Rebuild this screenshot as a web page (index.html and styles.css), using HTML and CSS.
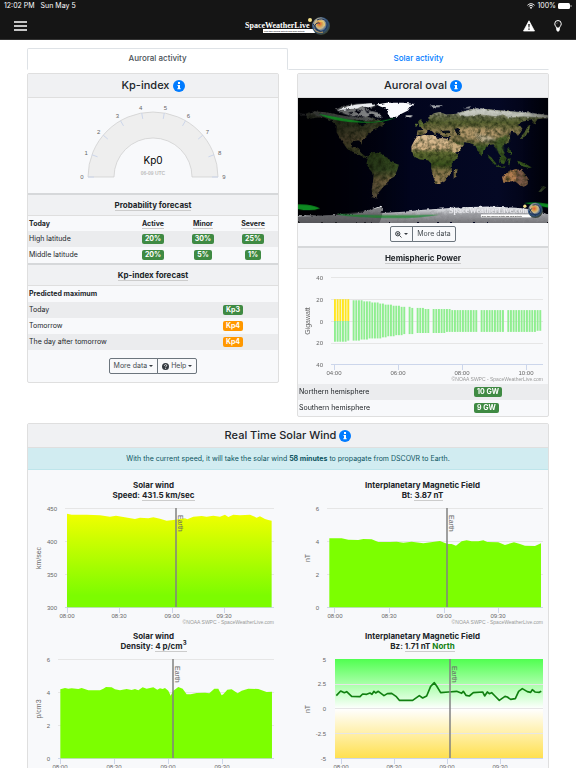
FILE: index.html
```html
<!DOCTYPE html>
<html lang="en">
<head>
<meta charset="utf-8">
<meta name="viewport" content="width=device-width, initial-scale=1">
<title>SpaceWeatherLive - Auroral activity</title>
<link rel="stylesheet" href="styles.css">
</head>
<body>
<svg class="defs" aria-hidden="true">
  <defs>
    <radialGradient id="globe" cx=".42" cy=".38" r=".65">
      <stop offset="0" stop-color="#e8553a"/><stop offset=".22" stop-color="#d8a04a"/><stop offset=".4" stop-color="#c9b890"/><stop offset=".65" stop-color="#2f5688"/><stop offset="1" stop-color="#3a3f26"/>
    </radialGradient>
    <symbol id="logo" viewBox="0 0 88 20">
      <text x="1" y="12" class="logo-name">SpaceWeatherLive</text>
      <rect x="19" y="13" width="54" height="4" fill="#fff"/>
      <text x="20" y="16" class="logo-tag">Real-time auroral activity and solar activity</text>
      <circle cx="77" cy="10" r="9" fill="url(#globe)"/>
      <path d="M69 8c2 2 4 6 8 8M73 4c6-3 11 1 10 6s-6 7-10 4-2-8 3-7" fill="none" stroke="#1d3357" stroke-width="1"/>
      <path d="M70 13c2 3 6 4 9 3" fill="none" stroke="#c9a25a" stroke-width="1"/>
      <path d="M75 6c4-2 6 1 5 4" fill="none" stroke="#f5d060" stroke-width="1"/>
      <circle cx="66" cy="4" r="2" fill="#f7e38b"/>
    </symbol>
    <symbol id="info" viewBox="0 0 12 12">
      <circle cx="6" cy="6" r="6" fill="#007bff"/>
      <path d="M5 2h2v2H5zM4.500 5H7v3.300h.7v1H4.300v-1H5V6h-.5z" fill="#fff"/>
    </symbol>
  </defs>
</svg>

<header class="topbar">
  <div class="status">
    <span>12:02 PM</span><span>Sun May 5</span>
    <span class="status-right">
      <svg width="8" height="6" viewBox="0 0 16 12"><path d="M1 4.500C5 .5 11 .5 15 4.500M3.500 7c3-2.700 6-2.700 9 0" fill="none" stroke="#fff" stroke-width="2"/><path d="M5.500 8.800q2.500-2 5 0L8 12z" fill="#fff"/></svg>
      100%
      <svg width="14" height="6" viewBox="0 0 14 6"><rect width="12" height="6" rx="1.500" fill="#fff"/><path d="M13 2v2" stroke="#aaa"/></svg>
    </span>
  </div>
  <nav class="navbar">
    <button class="icon-btn" aria-label="Menu"><svg width="13" height="10" viewBox="0 0 13 10"><path d="M0 1h13M0 5h13M0 9h13" stroke="#fff" stroke-width="1.300"/></svg></button>
    <a class="brand" href="#" aria-label="SpaceWeatherLive"><svg width="88" height="20"><use href="#logo"/></svg></a>
    <div class="nav-actions">
      <button class="icon-btn" aria-label="Alerts"><svg width="12" height="12" viewBox="0 0 24 24"><path d="M12 1.500 23 22H1z" fill="#fff" stroke="#fff" stroke-width="1.500" stroke-linejoin="round"/><path d="M10.500 8h3l-.6 7h-1.800zM10.600 17h2.800v2.700h-2.800z" fill="#151515"/></svg></button>
      <button class="icon-btn" aria-label="Theme"><svg width="8" height="12" viewBox="0 0 16 24"><path d="M5 16c0-3-3.500-4-3.500-8.500a6.500 6.500 0 0 1 13 0C14.500 12 11 13 11 16z" fill="none" stroke="#fff" stroke-width="2"/><path d="M4.500 16h7v4L9.500 23h-3l-2-3zM5 8a3 3 0 0 1 3-3" fill="#fff"/></svg></button>
    </div>
  </nav>
</header>

<main class="page">
  <div class="tabs">
    <a class="tab active" href="#">Auroral activity</a>
    <a class="tab" href="#">Solar activity</a>
  </div>

  <div class="columns">
    <section class="card">
      <h2 class="card-title">Kp-index <svg class="info"><use href="#info"/></svg></h2>
      <svg class="chart" viewBox="0 0 250 95" role="img" aria-label="Kp gauge">
        <path d="M60 79a65 65 0 0 1 130 0h-26a39 39 0 0 0-78 0z" fill="#eee" stroke="#ccc" stroke-width=".7"/>
        <g id="gauge"></g>
        <text x="125" y="66" class="kp-value">Kp0</text>
        <text x="125" y="77" class="kp-time">06-09 UTC</text>
      </svg>

      <h3 class="section-title"><span class="hint">Probability forecast</span></h3>
      <table class="grid-table odds-table">
        <thead><tr><th>Today</th><th class="mid"><span class="hint">Active</span></th><th class="mid"><span class="hint">Minor</span></th><th class="mid"><span class="hint">Severe</span></th></tr></thead>
        <tbody>
          <tr><td>High latitude</td><td class="mid"><span class="badge">20%</span></td><td class="mid"><span class="badge">30%</span></td><td class="mid"><span class="badge">25%</span></td></tr>
          <tr><td>Middle latitude</td><td class="mid"><span class="badge">20%</span></td><td class="mid"><span class="badge">5%</span></td><td class="mid"><span class="badge">1%</span></td></tr>
        </tbody>
      </table>

      <h3 class="section-title"><span class="hint">Kp-index forecast</span></h3>
      <table class="grid-table kp-table">
        <thead><tr><th>Predicted maximum</th><th></th></tr></thead>
        <tbody>
          <tr><td>Today</td><td class="mid"><span class="badge">Kp3</span></td></tr>
          <tr><td>Tomorrow</td><td class="mid"><span class="badge warn">Kp4</span></td></tr>
          <tr><td>The day after tomorrow</td><td class="mid"><span class="badge warn">Kp4</span></td></tr>
        </tbody>
      </table>
      <div class="actions roomy">
        <div class="btn-group">
          <button class="btn">More data <i class="caret"></i></button>
          <button class="btn"><svg width="7" height="7" viewBox="0 0 14 14"><circle cx="7" cy="7" r="7" fill="#343a40"/><path d="M4.800 5.300c.2-3 4.600-2.700 4.500-.2C9.200 6.700 7.300 6.600 7.200 8.500M7.200 9.800v1.800" fill="none" stroke="#fff" stroke-width="1.700"/></svg> Help <i class="caret"></i></button>
        </div>
      </div>
    </section>

    <section class="card">
      <h2 class="card-title">Auroral oval <svg class="info"><use href="#info"/></svg></h2>
      <svg class="chart map" viewBox="21 24 756 378" role="img" aria-label="World map with the auroral oval">
        <defs>
          <linearGradient id="sea"><stop offset="0" stop-color="#00000a"/><stop offset=".45" stop-color="#02051d"/><stop offset=".8" stop-color="#040824"/><stop offset="1" stop-color="#01020f"/></linearGradient>
          <linearGradient id="night"><stop offset="0" stop-color="#000" stop-opacity=".85"/><stop offset=".2" stop-color="#000" stop-opacity=".6"/><stop offset=".32" stop-color="#000" stop-opacity=".4"/><stop offset=".45" stop-color="#000" stop-opacity="0"/><stop offset=".9" stop-color="#000" stop-opacity="0"/><stop offset="1" stop-color="#000" stop-opacity=".5"/></linearGradient>
          <linearGradient id="africa" x2="0" y2="1"><stop offset="0" stop-color="#dcc096"/><stop offset=".27" stop-color="#d4b285"/><stop offset=".36" stop-color="#5f6a32"/><stop offset=".6" stop-color="#39501c"/><stop offset=".75" stop-color="#86744a"/><stop offset="1" stop-color="#a98c60"/></linearGradient>
          <linearGradient id="asia" x2="0" y2="1"><stop offset="0" stop-color="#a9aba0"/><stop offset=".14" stop-color="#74775a"/><stop offset=".28" stop-color="#56602f"/><stop offset=".48" stop-color="#8f7e54"/><stop offset=".66" stop-color="#7a7046"/><stop offset=".8" stop-color="#3c5a24"/></linearGradient>
          <linearGradient id="america" x2="0" y2="1"><stop offset="0" stop-color="#a5a79e"/><stop offset=".25" stop-color="#4a5632"/><stop offset=".6" stop-color="#86754f"/><stop offset="1" stop-color="#4f6131"/></linearGradient>
          <linearGradient id="amazon" x2="0" y2="1"><stop offset="0" stop-color="#3e5c24"/><stop offset=".38" stop-color="#3f5728"/><stop offset=".6" stop-color="#8e7a50"/><stop offset="1" stop-color="#85775b"/></linearGradient>
          <linearGradient id="ice" x2="0" y2="1"><stop offset="0" stop-color="#f4f6fa"/><stop offset=".5" stop-color="#9a9ba0"/><stop offset="1" stop-color="#77777b"/></linearGradient>
          <filter id="rough" x="0" y="0" width="1" height="1" color-interpolation-filters="sRGB">
            <feTurbulence type="fractalNoise" baseFrequency=".08" numOctaves="3" seed="4" result="n"/>
            <feDisplacementMap in="SourceGraphic" in2="n" scale="9" xChannelSelector="R" yChannelSelector="G" result="d"/>
            <feColorMatrix in="n" values="0 0 0 0 .1 0 0 0 0 .14 0 0 0 0 .05 1.600 0 0 0 -.6" result="m"/>
            <feComposite in="m" in2="d" operator="in" result="t"/>
            <feMerge><feMergeNode in="d"/><feMergeNode in="t"/></feMerge>
          </filter>
          <filter id="edge" x="0" y="0" width="1" height="1">
            <feTurbulence type="fractalNoise" baseFrequency=".1" numOctaves="2" seed="9" result="n"/>
            <feDisplacementMap in="SourceGraphic" in2="n" scale="10" xChannelSelector="R" yChannelSelector="G"/>
          </filter>
          <filter id="soft"><feGaussianBlur stdDeviation="2"/></filter>
          <filter id="blend"><feGaussianBlur stdDeviation="5"/></filter>
        </defs>
        <rect x="21" y="24" width="756" height="378" fill="url(#sea)"/>
        <g filter="url(#rough)">
          <path fill="url(#america)" d="M45 72 70 64 110 68 150 76 195 84 235 82 262 88 285 98 272 112 250 118 240 130 228 143 215 150 214 165 206 152 190 154 180 162 184 174 196 176 206 172 204 182 214 192 224 200 236 206 230 208 210 198 190 188 170 178 160 164 146 142 138 128 138 108 120 92 98 82 72 84 50 88z"/>
          <path fill="url(#amazon)" d="M238 192 250 187 272 192 282 200 296 207 300 216 326 226 322 240 312 262 298 270 290 284 280 292 270 304 262 312 258 328 246 324 244 300 248 276 250 254 236 238 228 222 232 208z"/>
          <path fill="url(#africa)" d="M380 142 400 136 430 136 440 144 460 146 474 148 482 168 492 190 508 190 500 208 486 222 486 244 476 258 466 276 450 284 438 284 430 262 424 240 424 222 414 212 390 210 374 204 364 190 364 170 372 154zM492 244 504 238 500 262 492 266z"/>
          <path fill="url(#asia)" d="M380 136 382 122 398 120 390 108 404 100 420 92 414 84 432 70 448 66 470 74 500 72 520 64 560 56 600 58 660 64 720 70 776 76 776 84 745 88 735 104 728 88 700 92 690 104 700 118 694 128 686 138 678 128 664 126 662 140 658 156 642 166 636 174 646 190 638 204 628 192 622 176 612 164 600 166 582 182 576 200 566 184 556 166 540 160 522 158 524 164 508 184 490 192 480 172 474 154 480 142 456 142 448 130 438 128 442 140 426 124 414 124 400 134z"/>
          <path fill="#c7ab7d" d="M470 152 482 148 494 158 502 164 522 166 508 184 490 192 482 176z"/>
          <g filter="url(#blend)">
            <path fill="#c0a374" opacity=".7" d="M500 118 540 112 580 116 626 120 650 130 620 146 570 152 540 150 510 142z"/>
            <path fill="#c9c5b0" opacity=".6" d="M556 132 580 138 606 142 622 152 590 158 566 148z"/>
            <path fill="#3f5a25" opacity=".9" d="M612 150 650 132 660 150 640 166 640 190 624 180z"/>
          </g>
          <path fill="#5d6f35" d="M384 92 394 88 402 108 388 112zM374 102h8v8h-8z"/>
          <path fill="#38581f" d="M594 194 606 204 622 224 616 226 600 208zM630 204 644 196 652 206 644 224 630 220zM655 208 664 206 660 228 654 222zM620 228 650 232 648 236 620 232zM684 214 704 220 728 234 720 236 690 228zM654 176 664 178 666 196 656 190z"/>
          <path fill="#62703a" d="M706 128 712 116 718 108 724 104 720 120 710 138 700 144 692 144z"/>
          <path fill="#b07c50" d="M638 262 652 252 664 244 682 238 690 246 698 238 706 252 718 270 714 286 704 292 692 288 678 276 658 280 642 280z"/>
          <path fill="#7c5a48" d="M682 240 690 248 698 238 706 252 718 270 714 286 704 292 692 288 680 272z"/>
          <path fill="#4a5d3b" d="M762 290 772 294 756 308 748 308z"/>
          <path fill="#03061c" d="M494 118 506 114 512 132 502 136zM452 124 478 122 484 130 460 130zM196 92 220 90 228 104 214 110z"/>
        </g>
        <g filter="url(#edge)">
          <path fill="#d7dadc" d="M134 60 160 48 196 42 240 40 258 46 240 54 216 50 236 62 262 68 276 78 262 84 244 72 226 82 204 76 184 80 160 72z"/>
          <path fill="#90949a" opacity=".8" d="M70 68 110 72 150 78 200 82 250 84 240 92 190 90 120 84 80 76zM22 70 50 74 34 78z"/>
          <path fill="#dfe2e0" opacity=".7" d="M500 72 530 62 570 54 600 60 650 64 720 68 776 76 776 86 740 82 700 80 660 84 640 74 620 80 570 74 530 80zM420 46h40l-14 6h-20zM520 56 544 48 540 56z"/>
          <path fill="#c8cac8" d="M346 76h22l-6 6h-14z"/>
          <path fill="#020417" d="M150 58 176 54 172 60zM196 58 214 62 206 70 192 66zM172 68 186 66 184 74zM224 60 238 66 230 70z"/>
        </g>
        <rect x="21" y="24" width="756" height="378" fill="url(#night)" opacity=".85"/>
        <g filter="url(#edge)">
          <path fill="#f2f4f7" opacity=".92" d="M140 62 170 50 200 44 244 40 256 46 236 52 212 50 200 56 170 58z"/>
          <path fill="#fafbfd" d="M258 44 290 38 340 38 374 42 362 50 354 62 334 72 314 84 300 84 292 72 294 58 270 50z"/>
        </g>
        <path filter="url(#edge)" fill="url(#ice)" d="M21 378 90 380 160 376 210 372 250 358 272 350 278 360 270 372 340 368 400 362 460 358 520 354 600 352 680 356 740 362 777 376V402H21z"/>
        <path d="M21 384V410H260Q280 388 276 352 200 376 21 384z" fill="#3a3a3e" opacity=".55"/>
        <g filter="url(#soft)" fill="#0c8a20">
          <path d="M84 72Q130 80 190 92T320 82Q280 102 200 98T84 72z" opacity=".9"/>
          <path d="M21 346Q60 344 88 358 60 368 21 360zM704 342Q740 336 777 344V356Q740 348 704 342z"/>
          <path d="M140 374Q280 382 450 376 380 390 260 386T140 374z" opacity=".65"/>
        </g>
        <text x="478" y="371" class="map-name">SpaceWeatherLive.com</text>
        <rect x="574" y="376" width="152" height="9" fill="#fff"/>
        <text x="577" y="383" class="map-tag">Real-time auroral activity and solar activity</text>
        <circle cx="739" cy="364" r="23" fill="url(#globe)"/>
        <path d="M720 358q8 16 20 22M730 348q20-6 24 12t-20 16-6-18" fill="none" stroke="#1d3357" stroke-width="3"/>
        <circle cx="707" cy="351" r="5" fill="#f7e38b"/>
      </svg>
      <div class="actions">
        <div class="btn-group">
          <button class="btn" aria-label="Zoom"><svg width="7" height="7" viewBox="0 0 14 14"><circle cx="5.500" cy="5.500" r="4.300" fill="none" stroke="#343a40" stroke-width="2"/><path d="m9 9 4 4M3.500 5.500h4M5.500 3.500v4" stroke="#343a40" stroke-width="1.800"/></svg><i class="caret"></i></button>
          <button class="btn">More data</button>
        </div>
      </div>

      <h3 class="section-title"><span class="hint">Hemispheric Power</span></h3>
      <svg class="chart" viewBox="0 1 250 115" role="img" aria-label="Hemispheric power">
        <path class="gridline" d="M33 9.500h212M33 31.500h212M33 53.500h212M33 75.500h212"/>
        <path class="axis" d="M33 96.500h212M36.500 97v5M100.500 97v5M164.500 97v5M228.500 97v5"/>
        <g id="bars"></g>
        <g class="labels end"><text x="25" y="12">40</text><text x="25" y="34">20</text><text x="25" y="56">0</text><text x="25" y="77">20</text><text x="25" y="99">40</text></g>
        <g class="labels"><text x="36" y="107">04:00</text><text x="100" y="107">06:00</text><text x="164" y="107">08:00</text><text x="228" y="107">10:00</text></g>
        <text class="axis-title" transform="translate(12 53) rotate(-90)">Gigawatt</text>
        <text class="credits" x="245" y="113">©NOAA SWPC - SpaceWeatherLive.com</text>
      </svg>
      <table class="grid-table hemi-table">
        <tbody>
          <tr><td>Northern hemisphere</td><td><span class="badge">10 GW</span></td></tr>
          <tr><td>Southern hemisphere</td><td><span class="badge">9 GW</span></td></tr>
        </tbody>
      </table>
    </section>
  </div>

  <section class="card wind">
    <h2 class="card-title">Real Time Solar Wind <svg class="info"><use href="#info"/></svg></h2>
    <p class="notice">With the current speed, it will take the solar wind <strong>58 minutes</strong> to propagate from DSCOVR to Earth.</p>
    <div class="columns charts">
      <figure>
        <figcaption>Solar wind<br>Speed: <span class="hint">431.5 km/sec</span></figcaption>
        <svg class="chart" viewBox="0 0 251 131" role="img" aria-label="Solar wind speed">
          <defs><linearGradient id="speed" gradientUnits="userSpaceOnUse" x1="0" y1="270" x2="0" y2="530"><stop offset="0" stop-color="#f8ff00"/><stop offset="1" stop-color="#7cfc00"/></linearGradient></defs>
          <path class="gridline" d="M37 8.500h209M37 41.500h209M37 74.500h209"/>
          <path class="axis" d="M37 107.500h209M39.500 108v5M91.500 108v5M144.500 108v5M196.500 108v5"/>
          <g transform="translate(-8 -81) scale(.3333)"><path fill="url(#speed)" d="M141 565V284L155 287 200 287 240 289 270 293 288 290 310 294 345 300 360 296 385 298 400 295 420 299 440 305 460 303 478 300 495 298 502 301 520 293 545 291 560 293 580 290 600 293 615 287 625 294 640 287 660 289 690 287 710 296 720 292 735 300 745 303 755 305V565z"/></g>
          <path class="now" d="M148 8v99"/>
          <text class="now-label" transform="translate(150 15) rotate(90)">Earth</text>
          <g class="labels end"><text x="29" y="11">450</text><text x="29" y="44">400</text><text x="29" y="77">350</text><text x="29" y="110">300</text></g>
          <g class="labels"><text x="39" y="118">08:00</text><text x="91" y="118">08:30</text><text x="144" y="118">09:00</text><text x="196" y="118">09:30</text></g>
          <text class="axis-title" transform="translate(13 58) rotate(-90)">km/sec</text>
          <text class="credits" x="246" y="124">©NOAA SWPC - SpaceWeatherLive.com</text>
        </svg>
      </figure>
      <figure>
        <figcaption>Interplanetary Magnetic Field<br>Bt: <span class="hint">3.87 nT</span></figcaption>
        <svg class="chart" viewBox="0 0 251 131" role="img" aria-label="Interplanetary magnetic field Bt">
          <path class="gridline" d="M30 8.500h216M30 41.500h216M30 74.500h216"/>
          <path class="axis" d="M30 107.500h216M37.500 108v5M92.500 108v5M147.500 108v5M201.500 108v5"/>
          <g transform="translate(-7 -81) scale(.3333)"><path fill="#7cff00" d="M118 565V358L155 358 175 362 205 363 220 360 245 361 265 369 300 369 320 368 340 371 365 368 400 373 450 366 465 372 475 375 485 375 498 380 515 367 530 364 545 367 565 367 580 364 592 369 625 370 645 378 672 370 690 375 705 380 735 381 753 373V565z"/></g>
          <path class="now" d="M150 8v99"/>
          <text class="now-label" transform="translate(152 15) rotate(90)">Earth</text>
          <g class="labels end"><text x="22" y="11">6</text><text x="22" y="44">4</text><text x="22" y="77">2</text><text x="22" y="110">0</text></g>
          <g class="labels"><text x="38" y="118">08:00</text><text x="92" y="118">08:30</text><text x="147" y="118">09:00</text><text x="201" y="118">09:30</text></g>
          <text class="axis-title" transform="translate(13 58) rotate(-90)">nT</text>
          <text class="credits" x="246" y="124">©NOAA SWPC - SpaceWeatherLive.com</text>
        </svg>
      </figure>
      <figure>
        <figcaption>Solar wind<br>Density: <span class="hint">4 p/cm<sup>3</sup></span></figcaption>
        <svg class="chart" viewBox="0 0 251 131" role="img" aria-label="Solar wind density">
          <path class="gridline" d="M30 8.500h216M30 41.500h216M30 74.500h216"/>
          <path class="axis" d="M30 107.500h216M32.500 108v5M86.500 108v5M140.500 108v5M194.500 108v5"/>
          <g transform="translate(-8 -12) scale(.3333)"><path fill="#7cff00" d="M121 358V151L135 147 145 149 155 148 175 150 185 147 205 154 240 154 250 149 258 144 275 145 285 151 300 154 320 150 335 153 345 150 355 154 368 145 380 149 400 145 412 152 420 148 428 150 435 147 445 155 452 170 460 155 475 144 488 149 500 166 512 166 530 162 555 161 568 163 583 149 595 149 605 169 610 166 622 152 635 151 653 163 665 155 685 149 715 150 740 159 756 158V358z"/></g>
          <path class="now" d="M145 8v99"/>
          <text class="now-label" transform="translate(147 15) rotate(90)">Earth</text>
          <g class="labels end"><text x="22" y="11">6</text><text x="22" y="44">4</text><text x="22" y="77">2</text><text x="22" y="110">0</text></g>
          <g class="labels"><text x="32" y="118">08:00</text><text x="86" y="118">08:30</text><text x="140" y="118">09:00</text><text x="194" y="118">09:30</text></g>
          <text class="axis-title" transform="translate(13 58) rotate(-90)">p/cm3</text>
          <text class="credits" x="246" y="124">©NOAA SWPC - SpaceWeatherLive.com</text>
        </svg>
      </figure>
      <figure>
        <figcaption>Interplanetary Magnetic Field<br>Bz: <span class="hint">1.71 nT <span class="north">North</span></span></figcaption>
        <svg class="chart" viewBox="0 0 251 131" role="img" aria-label="Interplanetary magnetic field Bz">
          <defs>
            <linearGradient id="north" x2="0" y2="1"><stop offset="0" stop-color="#50ff50"/><stop offset="1" stop-color="#fff"/></linearGradient>
            <linearGradient id="south" x2="0" y2="1"><stop offset="0" stop-color="#fff"/><stop offset="1" stop-color="#ffe050"/></linearGradient>
          </defs>
          <rect x="38" y="8" width="208" height="50" fill="url(#north)"/>
          <rect x="38" y="58" width="208" height="49" fill="url(#south)"/>
          <path class="gridline" d="M38 33.500h208M38 57.500h208M38 82.500h208"/>
          <path class="axis" d="M38 107.500h208M44.500 108v5M97.500 108v5M150.500 108v5M203.500 108v5"/>
          <g transform="translate(-7 -32) scale(.3333)"><path fill="none" stroke="#118011" stroke-width="5" stroke-linejoin="round" d="M139 230 152 216 163 221 170 218 185 232 210 233 218 225 230 226 240 222 246 226 252 217 257 222 265 217 282 230 292 224 305 223 318 232 328 244 368 244 388 230 398 237 410 231 422 202 433 191 440 201 452 221 475 219 500 217 515 223 520 217 528 229 538 231 550 221 578 219 584 231 592 219 598 224 605 221 615 231 628 244 645 232 652 234 662 241 676 239 686 217 697 209 712 218 722 220 727 212 735 219 748 220 754 217"/></g>
          <path class="now" d="M153 8v99"/>
          <text class="now-label" transform="translate(155 15) rotate(90)">Earth</text>
          <g class="labels end"><text x="29" y="11">5</text><text x="29" y="35">2.5</text><text x="29" y="60">0</text><text x="29" y="85">-2.5</text><text x="29" y="110">-5</text></g>
          <g class="labels"><text x="44" y="118">08:00</text><text x="97" y="118">08:30</text><text x="150" y="118">09:00</text><text x="203" y="118">09:30</text></g>
          <text class="axis-title" transform="translate(13 58) rotate(-90)">nT</text>
          <text class="credits" x="246" y="124">©NOAA SWPC - SpaceWeatherLive.com</text>
        </svg>
      </figure>
    </div>
  </section>
</main>
<script src="charts.js"></script>
</body>
</html>
```
FILE: styles.css
```css
* { box-sizing: border-box; }

html, body { height: 100%; margin: 0; }

body {
  display: flex;
  flex-direction: column;
  overflow: hidden;
  background: #fff;
  color: #212529;
  font: 7px/10px Inter, "Liberation Sans", sans-serif;
}

h2, h3, p, figure { margin: 0; }
button { font: inherit; color: inherit; cursor: pointer; }
svg { flex: none; }
.defs { position: absolute; width: 0; height: 0; }

/* Top bar */
.topbar {
  flex: none;
  height: 40px;
  background: #151515;
  border-bottom: 1px solid #333;
  color: #fff;
}
.status {
  display: flex;
  align-items: center;
  gap: 6px;
  height: 12px;
  padding: 0 4px;
}
.status-right {
  display: flex;
  align-items: center;
  gap: 2px;
  margin-left: auto;
}
.navbar {
  display: grid;
  grid-template-columns: 1fr auto 1fr;
  align-items: center;
  height: 27px;
  padding: 0 14px;
}
.icon-btn {
  display: flex;
  padding: 0;
  border: 0;
  background: none;
}
.brand { display: flex; }
.nav-actions {
  display: flex;
  justify-content: flex-end;
  align-items: center;
  gap: 19px;
}
.logo-name { font: bold 8px "Liberation Serif", serif; fill: #fff; }
.logo-tag { font: bold 2px "Liberation Sans", sans-serif; fill: #333; }

/* Page */
.page {
  flex: 1;
  min-height: 0;
  overflow-y: auto;
  scrollbar-width: none;
  padding: 8px 27px;
}
.tabs { display: flex; margin-bottom: 3px; }
.tab {
  flex: 1;
  height: 22px;
  border: 1px solid transparent;
  border-bottom-color: #dee2e6;
  color: #007bff;
  font-size: 8px;
  font-weight: 500;
  line-height: 18px;
  text-align: center;
  text-decoration: none;
}
.tab.active {
  border-color: #dee2e6;
  border-bottom-color: transparent;
  border-radius: 2px 2px 0 0;
  color: #495057;
}
.columns {
  display: grid;
  grid-template-columns: 1fr 1fr;
  align-items: start;
  gap: 18px;
}

/* Cards */
.card {
  overflow: hidden;
  background: #f8f9fb;
  border: 1px solid #dfdfdf;
  border-radius: 2px;
}
.card-title {
  display: flex;
  align-items: center;
  justify-content: center;
  gap: 3px;
  height: 24px;
  background: #f0f1f3;
  border-bottom: 1px solid #dfdfdf;
  font-size: 11px;
  font-weight: 500;
  line-height: 23px;
}
.info { width: 12px; height: 12px; }
.section-title {
  height: 23px;
  background: #f0f1f3;
  border-top: 2px solid #d6d8da;
  border-bottom: 1px solid #dfdfdf;
  font-size: 8px;
  font-weight: 700;
  line-height: 20px;
  text-align: center;
}
.hint { border-bottom: 1px solid #ccc; }
.grid-table {
  width: 100%;
  border-collapse: collapse;
  table-layout: fixed;
}
.grid-table th, .grid-table td {
  height: 16px;
  padding: 0 1px;
  text-align: left;
}
.grid-table.odds-table th { height: 15px; }
.grid-table th:first-child, .grid-table td:first-child { width: 40%; }
.grid-table.kp-table th:first-child { width: 64%; }
.grid-table.hemi-table td:first-child { width: 70%; }
.grid-table tbody tr:nth-child(odd) { background: #ebecee; }
.grid-table th.mid, .grid-table td.mid { text-align: center; }
.badge {
  display: inline-block;
  padding: 0 3px;
  border-radius: 2px;
  background: #3f8a43;
  color: #fff;
  font-weight: 700;
}
.badge.warn { background: #ff9800; }

.actions { display: flex; justify-content: center; padding: 3px 0 4px; }
.actions.roomy { padding: 8px 0; }
.btn-group { display: flex; }
.btn {
  display: flex;
  align-items: center;
  gap: 2px;
  height: 16px;
  padding: 0 4px;
  border: 1px solid #6c757d;
  border-radius: 0 2px 2px 0;
  background: transparent;
  color: #454b50;
}
.btn:first-child { border-radius: 2px 0 0 2px; }
.btn + .btn { margin-left: -1px; }
.caret {
  border: 2px solid transparent;
  border-top-color: #343a40;
  border-bottom: 0;
}

/* Solar wind */
.wind { margin-top: 6px; }
.notice {
  height: 22px;
  background: #d1ecf1;
  border-bottom: 1px solid #bee5eb;
  color: #0c5460;
  line-height: 21px;
  text-align: center;
}
.charts { padding-top: 10px; row-gap: 0; }
figcaption {
  font-size: 8px;
  font-weight: 700;
  line-height: 10px;
  text-align: center;
}
sup { font-size: 6px; line-height: 0; }
.north { color: #118011; }

/* Charts */
.chart { display: block; width: 100%; height: auto; }
.chart text { font-family: "Liberation Sans", sans-serif; }
.gridline { fill: none; stroke: #e6e6e6; }
.axis { fill: none; stroke: #ccd6eb; }
.now { stroke: #808080; stroke-width: 1.5; }
.chart .now-label { font-size: 7px; fill: #666; }
.labels { font-size: 6px; fill: #666; text-anchor: middle; }
.labels.end { text-anchor: end; }
.axis-title { font-size: 7px; fill: #666; text-anchor: middle; }
.credits { font-size: 5px; fill: #999; text-anchor: end; }
.chart .kp-value { font: 10px Inter, sans-serif; fill: #000; text-anchor: middle; }
.kp-time { font-size: 5px; font-weight: 700; fill: #c0c0c0; text-anchor: middle; }
.chart .map-name { font: bold 24px "Liberation Serif", serif; fill: #e9e9ee; }
.chart .map-tag { font-size: 6px; font-weight: 700; fill: #333; }
```
FILE: charts.js
```js
const NS = "http://www.w3.org/2000/svg";

function add(parent, name, attrs, text) {
  const el = document.createElementNS(NS, name);
  for (const key in attrs) el.setAttribute(key, attrs[key]);
  if (text !== undefined) el.textContent = text;
  parent.appendChild(el);
}

// Kp gauge: ten ticks over a half circle
const gauge = document.getElementById("gauge");
gauge.setAttribute("class", "labels");
for (let kp = 0; kp <= 9; kp++) {
  const a = Math.PI * (1 - kp / 9);
  const c = Math.cos(a), s = Math.sin(a);
  add(gauge, "line", {
    x1: 125 + 65 * c, y1: 79 - 65 * s,
    x2: 125 + 59 * c, y2: 79 - 59 * s,
    stroke: "#ccd6eb"
  });
  add(gauge, "text", { x: 125 + 71 * c, y: 81 - 70 * s }, kp);
}

// Hemispheric power: [first slot, last slot, gigawatt], one slot per five minutes
const north = [[0, 5, 20], [7, 10, 19], [11, 13, 18], [14, 16, 17], [17, 18, 16], [19, 21, 15],
  [22, 24, 14], [25, 28, 13], [29, 33, 12], [34, 43, 11], [44, 77, 10]];
const south = [[0, 4, 19], [5, 9, 18], [10, 12, 17], [13, 17, 16], [18, 19, 15], [20, 22, 14],
  [23, 25, 13], [26, 29, 12], [31, 41, 11], [42, 75, 10], [76, 77, 9]];
const missing = [6, 27, 30, 36, 54, 64];
const bars = document.getElementById("bars");
const zero = 53, perGigawatt = 1.09;

function drawBars(ranges, up) {
  for (const [from, to, gw] of ranges) {
    for (let slot = from; slot <= to; slot++) {
      if (missing.includes(slot)) continue;
      const h = gw * perGigawatt;
      add(bars, "rect", {
        x: 36 + slot * 8 / 3, y: up ? zero - h : zero, width: 1.9, height: h,
        fill: up && gw >= 20 ? "#ffe620" : "#90ee90"
      });
    }
  }
}
drawBars(north, true);
drawBars(south, false);
```
